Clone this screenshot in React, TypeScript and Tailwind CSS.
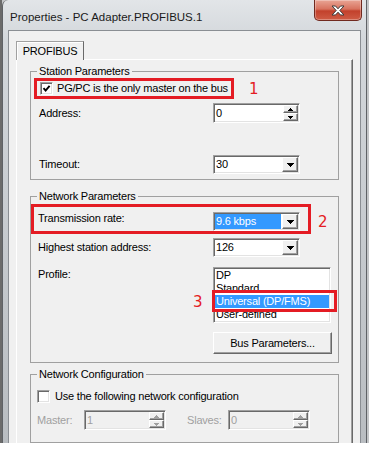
import React from "react";

const sunken =
  "border border-t-[#a0a0a0] border-l-[#a0a0a0] border-b-white border-r-white shadow-[inset_1px_1px_0_#696969,inset_-1px_-1px_0_#e3e3e3]";
const raised =
  "border border-t-white border-l-white border-b-[#696969] border-r-[#696969] shadow-[inset_-1px_-1px_0_#a0a0a0] bg-[#f0f0f0]";
const redNum =
  "font-['DejaVu_Sans',sans-serif] text-[15px] leading-[16px] tracking-normal text-[#e41c24]";

const ArrowDown = ({ c = "#000" }: { c?: string }) => (
  <svg width="7" height="4" viewBox="0 0 7 4" shapeRendering="crispEdges">
    <path d="M0 0H7V1H6V2H5V3H4V4H3V3H2V2H1V1H0Z" fill={c} />
  </svg>
);

const SmallUp = ({ c }: { c: string }) => (
  <svg width="5" height="3" viewBox="0 0 5 3" shapeRendering="crispEdges">
    <path d="M2 0H3V1H4V2H5V3H0V2H1V1H2Z" fill={c} />
  </svg>
);

const SmallDown = ({ c }: { c: string }) => (
  <svg width="5" height="3" viewBox="0 0 5 3" shapeRendering="crispEdges">
    <path d="M0 0H5V1H4V2H3V3H2V2H1V1H0Z" fill={c} />
  </svg>
);

function Check({ checked }: { checked?: boolean }) {
  return (
    <span className={`flex h-[13px] w-[13px] shrink-0 items-center justify-center bg-white ${sunken}`}>
      {checked && (
        <svg width="9" height="9" viewBox="0 0 9 9">
          <path d="M1.5 4.2 L3.6 6.5 L7.6 1.8" fill="none" stroke="#000" strokeWidth="1.9" />
        </svg>
      )}
    </span>
  );
}

function Spin({ value, w, disabled }: { value: string; w: string; disabled?: boolean }) {
  const c = disabled ? "#a0a0a0" : "#000";
  return (
    <div className={`flex h-[20px] ${w} ${disabled ? "bg-[#f0f0f0] text-[#a0a0a0]" : "bg-white"} ${sunken}`}>
      <div className="flex flex-1 items-center pl-[2px]">{value}</div>
      <div className="flex w-[16px] flex-col py-[1px] pr-[1px]">
        <div className={`flex flex-1 items-center justify-center ${raised}`}>
          <SmallUp c={c} />
        </div>
        <div className={`flex flex-1 items-center justify-center ${raised}`}>
          <SmallDown c={c} />
        </div>
      </div>
    </div>
  );
}

function Combo({ value, selected }: { value: string; selected?: boolean }) {
  return (
    <div className={`flex h-[19px] w-[87px] bg-white ${sunken}`}>
      <div className="flex flex-1 p-[1px]">
        <div className={`flex flex-1 items-center pl-[1px] ${selected ? "bg-[#3399ff] text-white" : ""}`}>
          {value}
        </div>
      </div>
      <div className={`my-[1px] mr-[1px] flex w-[16px] items-center justify-center ${raised}`}>
        <ArrowDown />
      </div>
    </div>
  );
}

function Group({ title, className, children }: { title: string; className: string; children: React.ReactNode }) {
  return (
    <div className={`border border-[#a0a0a0] ${className}`}>
      <div className="-mt-[7px] ml-[6px] w-fit bg-[#f0f0f0] px-[2px]">{title}</div>
      {children}
    </div>
  );
}

export default function App() {
  return (
    <div className="h-[461px] w-[369px] bg-white font-['Liberation_Sans',Arial,sans-serif] text-[11px] leading-[13px] tracking-[-0.2px] text-black">
      <div className="flex h-[443px] bg-[linear-gradient(to_right,#6b6b6b_0,#6b6b6b_2px,#c4c6c8_2px)]">
        <div className="ml-[2px] flex h-full w-[365px] flex-col overflow-hidden rounded-tl-[6px] border-x border-[#5f6266] bg-[linear-gradient(to_bottom,#e2e5e8,#d3d7db_40px,#b9bdc1)]">
          {/* title bar */}
          <div className="flex h-[30px] shrink-0 items-start">
            <div className="pl-[7px] pt-[10px] text-[11.5px] leading-[14px] tracking-normal text-[#1a1a1a]">
              Properties - PC Adapter.PROFIBUS.1
            </div>
            <div className="ml-auto mr-[4px] flex h-[21px] w-[48px] items-center justify-center rounded-b-[5px] border border-t-0 border-[#70291f] bg-[linear-gradient(to_bottom,#e9a595,#d8735f_45%,#c2412c_55%,#cf5c45)] shadow-[inset_0_0_0_1px_rgba(255,255,255,0.3)]">
              <svg width="14" height="11" viewBox="0 0 14 11">
                <path
                  d="M1 1H4.5L7 3.8L9.5 1H13L8.8 5.5L13 10H9.5L7 7.2L4.5 10H1L5.2 5.5Z"
                  fill="#fff"
                  stroke="#3c3c3c"
                  strokeWidth="1"
                  strokeLinejoin="round"
                />
              </svg>
            </div>
          </div>

          {/* client area */}
          <div className="mx-[5px] flex flex-1 flex-col border border-b-0 border-[#8a8e93] bg-[#f0f0f0] px-[7px] pt-[10px]">
            <div className="relative z-10 -mb-px flex h-[19px] w-[68px] items-center justify-center border-x border-t border-l-[#a0a0a0] border-t-[#a0a0a0] border-r-[#696969] bg-[#f0f0f0] pt-[1px] shadow-[inset_1px_1px_0_#fff]">
              PROFIBUS
            </div>
            <div className="flex flex-1 flex-col border-x border-t border-l-white border-t-white border-r-[#696969] px-[13px] shadow-[inset_-1px_0_0_#a0a0a0]">
              {/* Station Parameters */}
              <Group title="Station Parameters" className="mt-[11px] pb-[5px]">
                <div className="flex items-center">
                  <div className="ml-[3px] flex h-[21px] items-center gap-[4px] border-[3px] border-[#e41c24] pl-[3px] pr-[3px]">
                    <Check checked />
                    <span>PG/PC is the only master on the bus</span>
                  </div>
                  <span className={`ml-[15px] ${redNum}`}>1</span>
                </div>
                <div className="mt-[4px] flex items-center pl-[8px]">
                  <span className="w-[174px]">Address:</span>
                  <Spin value="0" w="w-[87px]" />
                </div>
                <div className="mt-[32px] flex items-center pl-[8px]">
                  <span className="w-[174px]">Timeout:</span>
                  <Combo value="30" />
                </div>
              </Group>

              {/* Network Parameters */}
              <Group title="Network Parameters" className="mt-[16px] pb-[8px]">
                <div className="mt-[1px] flex items-center">
                  <div className="flex h-[30px] w-[280px] items-start border-[3px] border-[#e41c24] pl-[4px] pt-[5px]">
                    <span className="w-[175px]">Transmission rate:</span>
                    <Combo value="9.6 kbps" selected />
                  </div>
                  <span className={`ml-[7px] pt-[5px] ${redNum}`}>2</span>
                </div>
                <div className="mt-[4px] flex items-center pl-[7px]">
                  <span className="w-[175px]">Highest station address:</span>
                  <Combo value="126" />
                </div>
                <div className="mt-[10px] flex items-start pl-[7px]">
                  <span className="w-[175px] pt-[1px]">Profile:</span>
                  <div className="relative">
                    <div className={`h-[56px] w-[118px] bg-white pt-[1px] ${sunken}`}>
                      <div className="h-[13px] pl-[2px]">DP</div>
                      <div className="h-[13px] pl-[2px]">Standard</div>
                      <div className="mx-[1px] h-[13px] bg-[#3399ff] pl-[1px] text-white">Universal (DP/FMS)</div>
                      <div className="h-[13px] pl-[2px]">User-defined</div>
                    </div>
                    <div className="absolute left-[-1px] top-[23px] h-[22px] w-[125px] border-[3px] border-[#e41c24]" />
                    <span className={`absolute left-[-20px] top-[27px] ${redNum}`}>3</span>
                  </div>
                </div>
                <div className={`ml-[182px] mt-[9px] flex h-[22px] w-[119px] items-center justify-center ${raised}`}>
                  Bus Parameters...
                </div>
              </Group>

              {/* Network Configuration */}
              <Group title="Network Configuration" className="mt-[11px] pb-[12px]">
                <div className="mt-[9px] flex items-center gap-[5px] pl-[6px]">
                  <Check />
                  <span>Use the following network configuration</span>
                </div>
                <div className="mt-[7px] flex items-center pl-[6px] text-[#a0a0a0]">
                  <span className="w-[47px]">Master:</span>
                  <Spin value="1" w="w-[82px]" disabled />
                  <span className="ml-[21px] w-[41px]">Slaves:</span>
                  <Spin value="0" w="w-[82px]" disabled />
                </div>
              </Group>
            </div>
          </div>
        </div>
      </div>
    </div>
  );
}
